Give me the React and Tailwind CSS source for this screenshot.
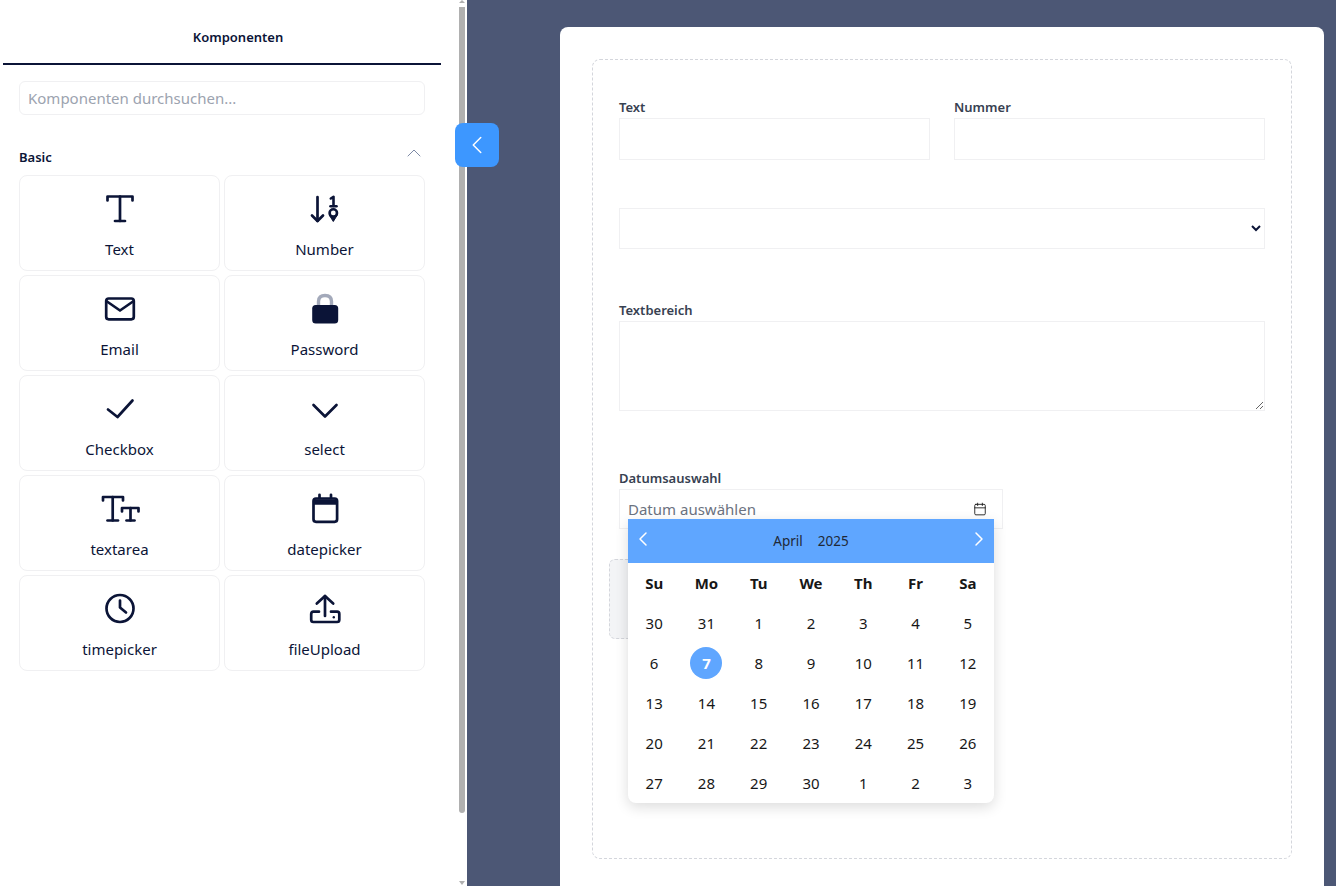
import { Calendar, ChevronLeft, ChevronRight, ChevronUp } from "lucide-react";

const NAVY = "#0b1437";

function IconSvg({ w = 32, children }) {
  return (
    <svg
      width={w}
      height="32"
      viewBox={`0 0 ${w} 32`}
      fill="none"
      stroke={NAVY}
      strokeWidth="2.7"
      strokeLinecap="round"
      strokeLinejoin="round"
    >
      {children}
    </svg>
  );
}

const ICONS = {
  text: (
    <IconSvg>
      <path d="M3.5 7.5V3.5H28.5V7.5" />
      <path d="M16 3.5V28" />
      <path d="M11 28H21" />
    </IconSvg>
  ),
  number: (
    <IconSvg>
      <path d="M8.5 4V28" />
      <path d="M3 22.5L8.5 28L14 22.5" />
      <path d="M21.8 5.5L24.5 3.8V13" strokeWidth="2.6" />
      <path d="M21.5 13.2H27.5" strokeWidth="2.6" />
      <circle cx="24.3" cy="20" r="3.7" strokeWidth="2.6" />
      <path d="M20.5 22.5L24.3 28.5L28 22.5" fill={NAVY} strokeWidth="1" />
    </IconSvg>
  ),
  email: (
    <IconSvg>
      <rect x="2.2" y="5.5" width="27.6" height="20.8" rx="2.5" />
      <path d="M3 8.5L16 17.5L29 8.5" />
    </IconSvg>
  ),
  password: (
    <IconSvg>
      <path d="M9.5 13V8.5C9.5 4 12 2.5 16 2.5C20 2.5 22.5 4 22.5 8.5V13" stroke="#a3a9ba" strokeWidth="3.4" />
      <rect x="3.2" y="12" width="26" height="18.4" rx="3.5" fill={NAVY} stroke="none" />
    </IconSvg>
  ),
  check: (
    <IconSvg>
      <path d="M4 16.5L13.5 24L28.5 7.5" />
    </IconSvg>
  ),
  select: (
    <IconSvg>
      <path d="M4.5 12L16 23.5L27.5 12" />
    </IconSvg>
  ),
  textarea: (
    <IconSvg w={40}>
      <path d="M3 7.5V4H23V7.5" />
      <path d="M12.7 4V27.5" />
      <path d="M7.5 27.5H18" />
      <path d="M22 18.5V15H38.5V18.5" />
      <path d="M30.5 15V27.5" />
      <path d="M26.5 27.5H34.5" />
    </IconSvg>
  ),
  date: (
    <IconSvg>
      <rect x="4.5" y="5.5" width="23.6" height="23.3" rx="2.5" />
      <path d="M4.5 9H28.1" strokeWidth="5.5" strokeLinecap="butt" />
      <path d="M10.5 1.8V5M22 1.8V5" />
    </IconSvg>
  ),
  time: (
    <IconSvg>
      <circle cx="16" cy="15.5" r="13.5" />
      <path d="M16 7.5V14.5L22 19.5" />
    </IconSvg>
  ),
  upload: (
    <IconSvg>
      <path d="M16 23V3" />
      <path d="M7.8 10.5L16 3L24.2 10.5" />
      <path d="M10 18.7H4.4C3 18.7 2.2 19.6 2.2 20.9V26.8C2.2 28.1 3 29 4.4 29H28.1C29.4 29 30.3 28.1 30.3 26.8V20.9C30.3 19.6 29.4 18.7 28.1 18.7H22" />
      <circle cx="24.8" cy="24.2" r="1.2" fill={NAVY} stroke="none" />
    </IconSvg>
  ),
};

const COMPONENTS = [
  { label: "Text", icon: "text" },
  { label: "Number", icon: "number" },
  { label: "Email", icon: "email" },
  { label: "Password", icon: "password" },
  { label: "Checkbox", icon: "check" },
  { label: "select", icon: "select" },
  { label: "textarea", icon: "textarea" },
  { label: "datepicker", icon: "date" },
  { label: "timepicker", icon: "time" },
  { label: "fileUpload", icon: "upload" },
];

const WEEKDAYS = ["Su", "Mo", "Tu", "We", "Th", "Fr", "Sa"];
const DAYS = [
  30, 31, 1, 2, 3, 4, 5,
  6, 7, 8, 9, 10, 11, 12,
  13, 14, 15, 16, 17, 18, 19,
  20, 21, 22, 23, 24, 25, 26,
  27, 28, 29, 30, 1, 2, 3,
];

function ComponentCard({ label, icon }) {
  return (
    <div className="h-[96px] rounded-lg border border-[#f0f0f2] bg-white flex flex-col items-center pt-[17px]">
      <div className="h-[32px] flex items-center justify-center">{ICONS[icon]}</div>
      <span className="mt-[13px] text-[15px] leading-[22px] text-[#0b1437]">{label}</span>
    </div>
  );
}

function Sidebar() {
  return (
    <aside className="w-[467px] h-full bg-white flex shrink-0">
      <div className="w-[459px] pl-[3px] pr-[18px]">
        <div className="h-[65px] border-b-2 border-[#0b1437] flex items-center justify-center pt-[13px] pl-[32px]">
          <span className="text-[13px] font-semibold text-[#0b1437]">Komponenten</span>
        </div>
        <div className="pl-[16px] pr-[16px]">
          <input
            placeholder="Komponenten durchsuchen..."
            className="mt-[16px] w-full h-[34px] rounded-md border border-[#f0f0f2] px-2 text-[15px] text-[#0b1437] placeholder:text-[#9ca3af] outline-none"
          />
          <div className="mt-[32px] h-[21px] flex items-center justify-between">
            <span className="text-[13px] font-semibold text-[#0b1437]">Basic</span>
            <ChevronUp size={24} strokeWidth={1} className="text-[#7d8aa6] mb-[9px] shrink-0 -mr-[1px]" />
          </div>
          <div className="mt-[7px] grid grid-cols-2 gap-x-[4px] gap-y-[4px]">
            {COMPONENTS.map((c) => (
              <ComponentCard key={c.label} label={c.label} icon={c.icon} />
            ))}
          </div>
        </div>
      </div>
      {/* scrollbar */}
      <div className="w-[8px] h-full flex flex-col items-start">
        <div className="w-[6px] h-[7px] flex justify-center">
          <div className="w-0 h-0 border-x-[3px] border-x-transparent border-b-[3px] border-b-[#b0b0b0]" />
        </div>
        <div className="w-[6px] h-[806px] rounded-b-[3px] bg-[#b0b0b0]" />
        <div className="w-[6px] flex-1 flex justify-center items-end pb-[1px]">
          <div className="w-0 h-0 border-x-[3px] border-x-transparent border-t-[4px] border-t-[#b0b0b0]" />
        </div>
      </div>
    </aside>
  );
}

function DatePopup() {
  return (
    <div className="absolute left-[9px] top-[30px] w-[366px] rounded-b-lg bg-white shadow-[0_4px_14px_rgba(0,0,0,0.14)] overflow-hidden z-10">
      <div className="h-[44px] bg-[#5fa6ff] flex items-center justify-between px-[3px]">
        <ChevronLeft size={24} strokeWidth={1.5} className="text-white mb-[4px]" />
        <div className="flex gap-[15px] text-[13.5px] text-[#1f2937] pt-[1px]">
          <span>April</span>
          <span>2025</span>
        </div>
        <ChevronRight size={24} strokeWidth={1.5} className="text-white mb-[4px]" />
      </div>
      <div className="grid grid-cols-7">
        {WEEKDAYS.map((d) => (
          <div key={d} className="h-[40px] flex items-center justify-center text-[15px] font-bold text-[#171717]">
            {d}
          </div>
        ))}
        {DAYS.map((d, i) => (
          <div key={i} className="h-[40px] flex items-center justify-center text-[15px] leading-[20px] pb-px text-[#171717]">
            {i === 8 ? (
              <span className="w-[32px] h-[32px] mt-px rounded-full bg-[#5fa6ff] text-white font-bold text-[15px] flex items-center justify-center">
                {d}
              </span>
            ) : (
              d
            )}
          </div>
        ))}
      </div>
    </div>
  );
}

function FormCanvas() {
  const field = "w-full border border-[#f0f0f2] bg-white outline-none block";
  const label = "block h-[20px] mb-px text-[13px] leading-[20px] font-semibold text-[#374151]";

  return (
    <div className="h-full w-[700px] rounded-lg border border-dashed border-[#d4d6dc] px-[26px] pt-[37px]">
      <div className="grid grid-cols-2 gap-x-[24px]">
        <div>
          <label className={label}>Text</label>
          <input className={`${field} h-[42px]`} />
        </div>
        <div>
          <label className={label}>Nummer</label>
          <input className={`${field} h-[42px]`} />
        </div>
      </div>
      <select className={`${field} h-[41px] mt-[48px] text-[#0b1437] text-[14px] pl-1`} />
      <div className="mt-[51px]">
        <label className={label}>Textbereich</label>
        <textarea className={`${field} h-[90px]`} />
      </div>
      <div className="mt-[57px]">
        <label className={label}>Datumsauswahl</label>
        <div className="relative w-[384px]">
          <div className="h-[40px] border border-[#f0f0f2] flex items-center justify-between pl-[8px] pr-[15px]">
            <span className="text-[15px] text-[#6b7280]">Datum auswählen</span>
            <Calendar size={14} strokeWidth={1.5} className="text-[#171717]" />
          </div>
          <DatePopup />
        </div>
      </div>
      <div className="mt-[30px] -ml-[10px] w-[300px] h-[80px] rounded-md border border-dashed border-[#d4d6dc] bg-[#f3f4f6]" />
    </div>
  );
}

export default function App() {
  return (
    <div className="relative w-full h-screen flex overflow-hidden bg-[#4c5775] font-['Noto_Sans',sans-serif]">
      <Sidebar />
      <main className="flex-1 h-full pt-[27px] pl-[93px] pr-[12px]">
        <div className="h-[900px] rounded-lg bg-white px-[32px] pt-[32px] pb-[27px]">
          <div className="h-[800px]">
            <FormCanvas />
          </div>
        </div>
      </main>
      <button className="absolute left-[455px] top-[123px] w-[44px] h-[44px] rounded-lg bg-[#3d97ff] flex items-center justify-center">
        <ChevronLeft size={30} strokeWidth={1.2} className="text-white -ml-[1px]" />
      </button>
    </div>
  );
}
